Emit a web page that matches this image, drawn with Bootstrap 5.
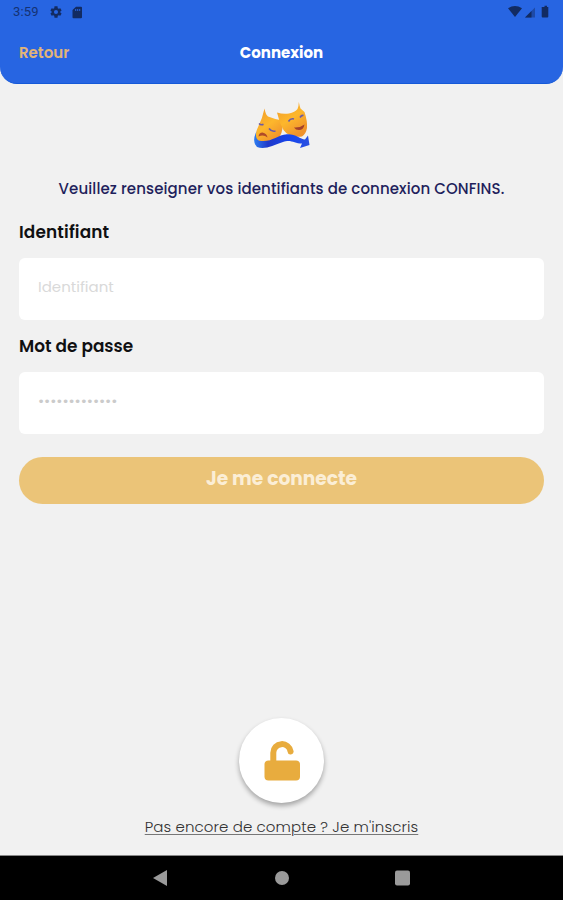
<!DOCTYPE html>
<html lang="fr">
<head>
<meta charset="utf-8">
<meta name="viewport" content="width=device-width, initial-scale=1">
<title>Connexion</title>
<link href="https://cdn.jsdelivr.net/npm/bootstrap@5.3.0/dist/css/bootstrap.min.css" rel="stylesheet">
<style>
body { font-family: Poppins, Inter, "Open Sans", sans-serif; background: #f1f1f1; color: #101012; line-height: 1.5; }
.screen { height: 900px; overflow: hidden; }
.app-header { height: 83.5px; background: #2765e2; border-radius: 0 0 17px 17px; border-bottom: 1px solid #1559d8; }
.status { height: 24px; padding: 0 13px; color: #153273; font: 400 13px/24px Roboto, sans-serif; letter-spacing: .2px; }
.status svg { fill: #122b62; }
.status-icons { margin-left: 10px; }
.title-row { height: 56px; padding: 2px 19px 0; }
.back { color: #e2b478; font-size: 15px; font-weight: 600; text-decoration: none; }
.title { font-size: 15px; font-weight: 700; color: #fff; }
.logo { height: 60px; margin-top: 11.5px; }
.hint { font-size: 15px; font-weight: 500; color: #1f1f5c; height: 22px; line-height: 22px; margin-top: 23px; letter-spacing: .1px; white-space: nowrap; }
.form-area { padding: 0 19px; }
.field-label { display: block; font-size: 16.9px; font-weight: 600; line-height: 24px; height: 24px; margin: 14.5px 0 14px; }
.field-label:first-child { margin-top: 20px; margin-bottom: 14px; letter-spacing: .15px; }
.field { height: 61.5px; border: 0; border-radius: 6px; padding: 0 19px 4px; font-size: 15px; background: #fff; }
.field::placeholder { color: #d9d9d9; opacity: 1; }
.field[type=password]::placeholder { color: #cbcbcb; letter-spacing: -.08px; }
.submit { height: 47px; background: #ebc478; color: #fbeed6; border: 0; font-size: 18.6px; font-weight: 700; padding: 0 0 3px; margin-top: 23.5px; }
.lock { width: 85px; height: 85px; background: #fff; box-shadow: 0 3px 5px rgba(0,0,0,.32); }
.signup { font-size: 15px; font-weight: 300; color: #333; line-height: 22px; margin-top: 13px; margin-bottom: 17px; letter-spacing: .1px; text-underline-offset: 2px; text-decoration-thickness: 1px; text-decoration-color: #777; }
.android-nav { height: 45px; background: #000; border-top: 1px solid #888; }
</style>
</head>
<body>
<div class="screen d-flex flex-column">
  <header class="app-header flex-shrink-0">
    <div class="status d-flex align-items-center justify-content-between">
      <div class="d-flex align-items-center">
        <span class="clock">3:59</span>
        <div class="status-icons d-flex align-items-center gap-2">
        <svg width="14" height="14" viewBox="0 0 24 24"><path fill-rule="evenodd" d="M19.4 13a7.500 7.500 0 0 0 0-2l2.200-1.700-2.200-3.700-2.600 1a7 7 0 0 0-1.800-1L14.600 2H9.400L9 5.600a7 7 0 0 0-1.800 1l-2.600-1-2.200 3.700L4.600 11a7.500 7.500 0 0 0 0 2l-2.200 1.700 2.200 3.700 2.600-1a7 7 0 0 0 1.800 1l.4 3.600h5.200l.4-3.600a7 7 0 0 0 1.800-1l2.600 1 2.200-3.700zM12 15.500a3.500 3.500 0 1 1 0-7 3.500 3.500 0 0 1 0 7z"/></svg>
        <svg width="12" height="13" viewBox="0 0 12 13"><path fill-rule="evenodd" d="M5 .8h5a1 1 0 0 1 1 1v9.400a1 1 0 0 1-1 1H2.500a1 1 0 0 1-1-1V4zM4.200 3v2h1V3zm2 0v2h1V3zm2 0v2h1V3z"/></svg>
        </div>
      </div>
      <svg width="42" height="14" viewBox="0 0 42 14"><path d="M0 3.300Q7-1.300 14 3.300L7 12z"/><path d="M27 2.500V12.500H17z" opacity=".45"/><path d="M23.500 6v6.500H17z"/><path d="M36.500 .8h2.500v1.200h1.300v9.500a1 1 0 0 1-1 1h-4.600a1 1 0 0 1-1-1V2h2.800z"/></svg>
    </div>
    <div class="title-row row g-0 align-items-center">
      <div class="col"><a class="back" href="#">Retour</a></div>
      <div class="col-auto title">Connexion</div>
      <div class="col"></div>
    </div>
  </header>

  <main class="flex-grow-1 d-flex flex-column">
    <div class="logo text-center">
      <svg width="84" height="60" viewBox="0 0 84 60" aria-label="Masques de théâtre">
        <defs>
          <linearGradient id="gold" x1="0" y1="0" x2="0.600" y2="1"><stop offset="0" stop-color="#f0982a"/><stop offset=".55" stop-color="#fdb72c"/><stop offset="1" stop-color="#ef922c"/></linearGradient>
          <linearGradient id="ribbon" x1="0" x2="1"><stop offset="0" stop-color="#2d7df0"/><stop offset=".25" stop-color="#2039c9"/><stop offset=".65" stop-color="#1746ee"/><stop offset="1" stop-color="#2a50e0"/></linearGradient>
        </defs>
        <path d="M24.500 13.500Q25.500 19.500 28 21.500Q34 24 42.500 25.500Q43.500 35 40 41Q36 47 28 48L15.500 45Q15 38 18.500 31Q22.500 23 24.500 13.500Z" fill="url(#gold)"/>
        <path d="M37 17.500Q43 19.500 49 18.500Q55 17 57.500 14Q58.800 11 58.800 7Q59.600 11 60.500 13.500L64.500 17Q67.500 26 67 33Q66 39 62 41.500Q49 43 43.500 35Q39 27 37 17.500Z" fill="url(#gold)"/>
        <path d="M19 28.500q2 2 4.500 .8M29 33.500q2.500 3.500 6.500 2.500M48.500 26.500q2-3.500 5.500-2.500M60 22.500q1.500-2.500 3.500-2" fill="none" stroke="#6a5aa8" stroke-width="1.600"/>
        <path d="M18.500 41.500q.5-4 4-4 4.500 1 5 5-4-3.500-9-1z" fill="#b04a28"/>
        <path d="M54 32.500q6 .5 10.500-3-1 5.500-5.500 5.500-3.500 0-5-2.500" fill="#a3402c"/>
        <path d="M16.500 36Q14.500 44 19.500 45.800C32 47.500 37 40 47 39.200C56 38.800 60 44 65 44.500L68 40.500L69.500 50L60 53L62 48.500C54 48.500 51 44 43 47C33 50.500 25 55 17 52Q11.500 47 16.500 36Z" fill="url(#ribbon)"/>
      </svg>
    </div>
    <p class="hint text-center mb-0">Veuillez renseigner vos identifiants de connexion CONFINS.</p>
    <form class="form-area">
      <label class="field-label" for="login">Identifiant</label>
      <input class="field form-control" id="login" type="text" placeholder="Identifiant">
      <label class="field-label" for="pass">Mot de passe</label>
      <input class="field form-control" id="pass" type="password" placeholder="•••••••••••••">
      <button class="submit btn rounded-pill w-100" type="button">Je me connecte</button>
    </form>
    <div class="mt-auto d-flex flex-column align-items-center">
      <div class="lock rounded-circle d-flex align-items-center justify-content-center">
        <svg width="36" height="42" viewBox="0 0 36 42"><path d="M9.300 23V12.800a8.700 8.700 0 0 1 17.300-1.300" fill="none" stroke="#e8ac3e" stroke-width="6" stroke-linecap="round"/><rect x=".5" y="20.500" width="35.500" height="20" rx="4" fill="#e8ac3e"/></svg>
      </div>
      <a class="signup" href="#">Pas encore de compte ? Je m'inscris</a>
    </div>
  </main>

  <nav class="android-nav d-flex justify-content-center align-items-center flex-shrink-0">
    <svg width="258" height="18" viewBox="0 0 258 18" fill="#9a9a9a"><path d="M0 9L14 1V17z"/><circle cx="129" cy="9" r="7"/><rect x="242" y="1.500" width="15" height="15" rx="2"/></svg>
  </nav>
</div>
<script src="https://cdn.jsdelivr.net/npm/bootstrap@5.3.0/dist/js/bootstrap.bundle.min.js"></script>
</body>
</html>
